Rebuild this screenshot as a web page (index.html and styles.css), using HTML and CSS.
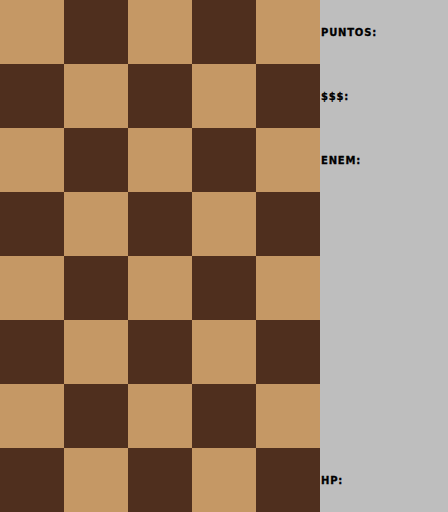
FILE: index.html
```html
<!DOCTYPE html>
<html>
<head>
<meta charset="utf-8">
<link rel="stylesheet" href="styles.css">
</head>
<body>
<div class="game">
  <div class="board">
    <div class="sq l"></div><div class="sq d"></div><div class="sq l"></div><div class="sq d"></div><div class="sq l"></div>
    <div class="sq d"></div><div class="sq l"></div><div class="sq d"></div><div class="sq l"></div><div class="sq d"></div>
    <div class="sq l"></div><div class="sq d"></div><div class="sq l"></div><div class="sq d"></div><div class="sq l"></div>
    <div class="sq d"></div><div class="sq l"></div><div class="sq d"></div><div class="sq l"></div><div class="sq d"></div>
    <div class="sq l"></div><div class="sq d"></div><div class="sq l"></div><div class="sq d"></div><div class="sq l"></div>
    <div class="sq d"></div><div class="sq l"></div><div class="sq d"></div><div class="sq l"></div><div class="sq d"></div>
    <div class="sq l"></div><div class="sq d"></div><div class="sq l"></div><div class="sq d"></div><div class="sq l"></div>
    <div class="sq d"></div><div class="sq l"></div><div class="sq d"></div><div class="sq l"></div><div class="sq d"></div>
  </div>
  <div class="panel">
    <div class="label">PUNTOS:</div>
    <div class="label">$$$:</div>
    <div class="label">ENEM:</div>
    <div class="label"></div>
    <div class="label"></div>
    <div class="label"></div>
    <div class="label"></div>
    <div class="label">HP:</div>
  </div>
</div>
</body>
</html>
```
FILE: styles.css
```css
html, body {
  margin: 0;
  padding: 0;
  background: #bebebe;
}
.game {
  display: grid;
  grid-template-columns: 320px 128px;
  width: 448px;
  height: 512px;
}
.board {
  display: grid;
  grid-template-columns: repeat(5, 64px);
  grid-template-rows: repeat(8, 64px);
}
.sq.l { background: #c59865; }
.sq.d { background: #4f2f1e; }
.panel {
  display: grid;
  grid-template-rows: repeat(8, 64px);
  background: #bebebe;
}
.label {
  display: flex;
  align-items: center;
  padding-left: 1px;
  font-family: "DejaVu Sans", sans-serif;
  font-weight: bold;
  font-size: 10px;
  letter-spacing: 0.8px;
  -webkit-text-stroke: 0.3px #000;
  color: #000;
}
```
